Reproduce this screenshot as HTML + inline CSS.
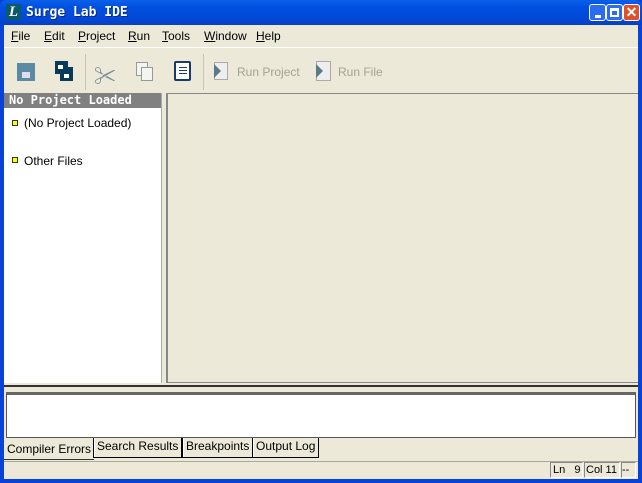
<!DOCTYPE html><html><head><style>
*{margin:0;padding:0;box-sizing:border-box}
html,body{width:642px;height:483px;overflow:hidden}
body{font-family:"Liberation Sans","Noto Sans CJK JP",sans-serif;font-size:12px;background:#0842d6;position:relative;white-space:nowrap}
.a{position:absolute}
.title{left:0;top:0;width:642px;height:25px;background:linear-gradient(#0a5fe8,#0050e0 30%,#0347d6 80%,#0a3fc0);border-radius:6px 6px 0 0}
.client{left:4px;top:25px;width:634px;height:454px;background:#ece9d8}
u{text-decoration:underline}
.btn{width:17px;height:17px;border:1px solid #fff;border-radius:3px;top:4px}
.tab{top:438px;height:20px;border:1px solid #000;border-top:none;background:#ece9d8;padding:1px 3px;font-size:12px;box-shadow:inset 1px 0 #fff}
.sb{top:462px;height:16px;border:1px solid #888;border-right-color:#fff;border-bottom-color:#fff;font-size:11px;line-height:14px;overflow:hidden}
</style></head><body>
<div class="a title"></div>
<div class="a" style="left:6px;top:4px;width:15px;height:16px;background:#0a5a6a;color:#fff;font:italic bold 15px 'Liberation Serif',serif;line-height:16px;text-align:center">L</div>
<div class="a" style="left:26px;top:5px;color:#fff;font:bold 13px 'DejaVu Sans Mono','Liberation Mono',monospace;text-shadow:1px 1px #0a2a80">Surge Lab IDE</div>
<div class="a btn" style="left:589px;background:#2b6cf0"><div class="a" style="left:5px;top:10px;width:6px;height:3px;background:#fff"></div></div>
<div class="a btn" style="left:606px;background:#2b6cf0"><div class="a" style="left:3px;top:3px;width:9px;height:9px;border:2px solid #fff;border-top-width:3px"></div></div>
<div class="a btn" style="left:623px;background:#e0502a;color:#fff;font:bold 14px sans-serif;text-align:center;line-height:15px">✕</div>
<div class="a client"></div>
<div class="a" style="left:11px;top:29px;font-size:12px">
<span class="a" style="left:0"><u>F</u>ile</span><span class="a" style="left:33px"><u>E</u>dit</span><span class="a" style="left:67px"><u>P</u>roject</span><span class="a" style="left:117px"><u>R</u>un</span><span class="a" style="left:151px"><u>T</u>ools</span><span class="a" style="left:193px"><u>W</u>indow</span><span class="a" style="left:245px"><u>H</u>elp</span></div>
<div class="a" style="left:4px;top:47px;width:634px;height:1px;background:#fff"></div>
<div class="a" style="left:17px;top:63px;width:18px;height:18px;background:#5a8aa4"><div class="a" style="left:5px;top:9px;width:8px;height:6px;background:#dde"></div></div>
<div class="a" style="left:55px;top:61px;width:18px;height:20px;"><div class="a" style="left:0;top:0;width:13px;height:13px;background:#0a3a5a"></div><div class="a" style="left:5px;top:6px;width:13px;height:14px;background:#0a3a5a"></div><div class="a" style="left:3px;top:4px;width:5px;height:4px;background:#fff"></div><div class="a" style="left:9px;top:13px;width:5px;height:4px;background:#fff"></div></div>
<div class="a" style="left:85px;top:54px;width:1px;height:36px;background:#c8c5b5"></div>
<div class="a" style="left:94px;top:59px;font-size:22px;color:#7a8f9a">✂</div>
<div class="a" style="left:136px;top:62px;width:12px;height:14px;border:1px solid #999;background:#f4f4f0"></div><div class="a" style="left:141px;top:67px;width:12px;height:14px;border:1px solid #999;background:#f4f4f0"></div>
<div class="a" style="left:174px;top:61px;width:17px;height:20px;border:2px solid #1a3a6a;background:#fff;border-radius:2px"></div><div class="a" style="left:179px;top:67px;width:8px;height:1px;background:#1a3a6a;box-shadow:0 3px #1a3a6a,0 6px #1a3a6a"></div>
<div class="a" style="left:203px;top:54px;width:1px;height:36px;background:#c8c5b5"></div>
<div class="a" style="left:214px;top:62px;width:14px;height:18px;border:1px solid #aaa;background:#eee"></div><div class="a" style="left:214px;top:64px;width:0;height:0;border-left:7px solid #5a7a8a;border-top:7px solid transparent;border-bottom:7px solid transparent"></div>
<div class="a" style="left:237px;top:65px;color:#a5a294">Run Project</div>
<div class="a" style="left:316px;top:61px;width:15px;height:20px;border:1px solid #aaa;background:#eee"></div><div class="a" style="left:316px;top:64px;width:0;height:0;border-left:7px solid #5a7a8a;border-top:7px solid transparent;border-bottom:7px solid transparent"></div>
<div class="a" style="left:338px;top:65px;color:#a5a294">Run File</div>
<div class="a" style="left:4px;top:93px;width:158px;height:290px;background:#fff;border-right:1px solid #aaa"></div>
<div class="a" style="left:4px;top:93px;width:157px;height:15px;background:#808080;color:#fff;font:bold 12px 'DejaVu Sans Mono','Liberation Mono',monospace;padding-left:5px;line-height:15px">No Project Loaded</div>
<div class="a" style="left:12px;top:120px;width:6px;height:6px;border:1px solid #333;background:#ff0"></div>
<div class="a" style="left:24px;top:116px">(No Project Loaded)</div>
<div class="a" style="left:12px;top:157px;width:6px;height:6px;border:1px solid #333;background:#ff0"></div>
<div class="a" style="left:24px;top:154px">Other Files</div>
<div class="a" style="left:166px;top:93px;width:472px;height:290px;border:1px solid #888;border-right:none;border-left:2px solid #888;background:#ece9d8"></div>
<div class="a" style="left:4px;top:385px;width:634px;height:2px;background:#333"></div>
<div class="a" style="left:6px;top:392px;width:630px;height:46px;background:#fff;border:1px solid #555;border-top:3px solid #666"></div>
<div class="a tab" style="left:4px;top:438px;height:22px;border:none;border-bottom:1px solid #333;padding-top:4px;box-shadow:none">Compiler Errors</div>
<div class="a tab" style="left:93px">Search Results</div>
<div class="a tab" style="left:182px">Breakpoints</div>
<div class="a tab" style="left:252px">Output Log</div>
<div class="a" style="left:4px;top:461px;width:634px;height:1px;background:#aca899"></div>
<div class="a sb" style="left:550px;width:33px;padding-left:2px">Ln &nbsp;&nbsp;9</div>
<div class="a sb" style="left:584px;width:36px;padding-left:1px">Col 11</div>
<div class="a sb" style="left:621px;width:15px">--</div>
</body></html>
